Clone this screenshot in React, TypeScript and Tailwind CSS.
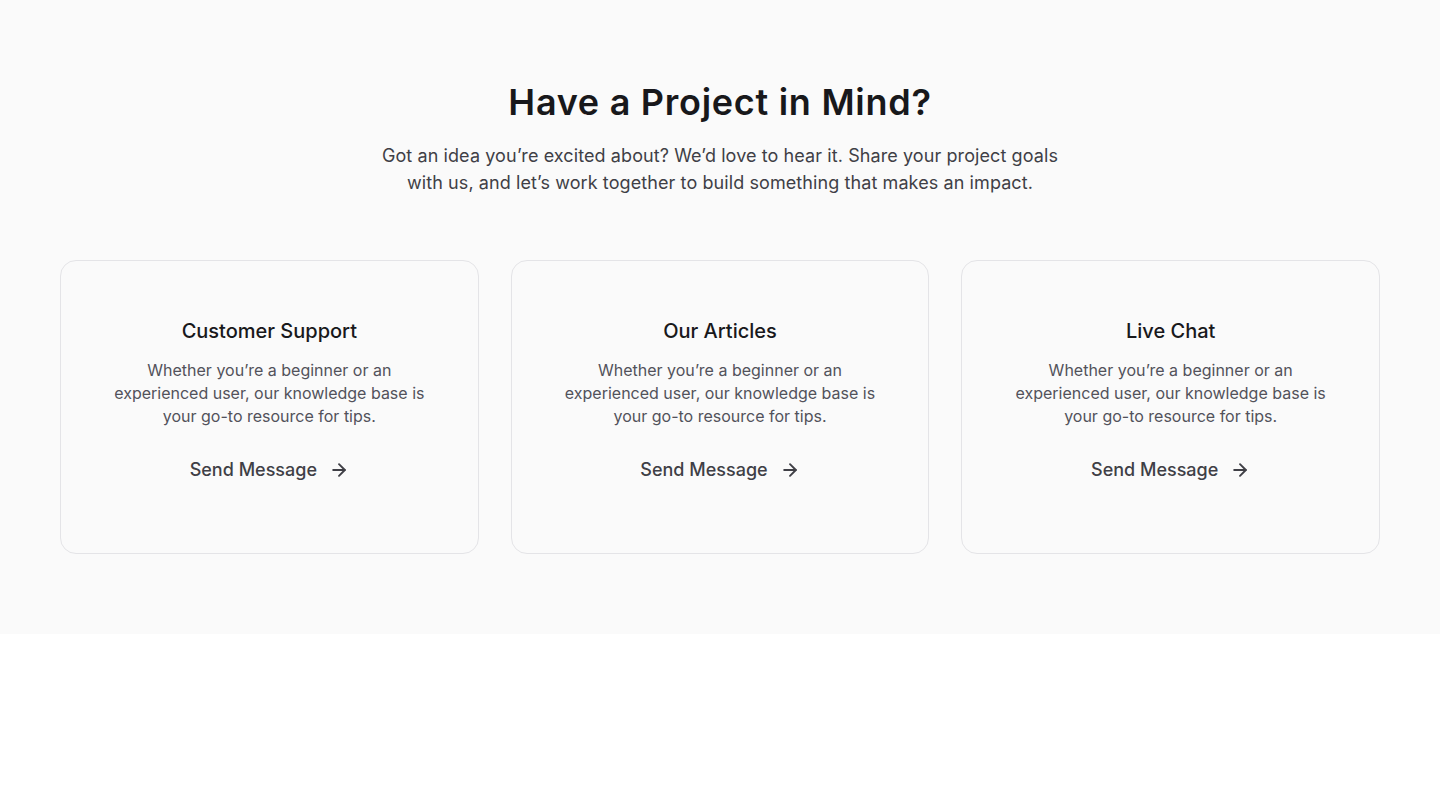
import { ArrowRight } from 'lucide-react'

const cards = [
  { title: 'Customer Support' },
  { title: 'Our Articles' },
  { title: 'Live Chat' },
]

function ContactCard({ title }: { title: string }) {
  return (
    <div className="flex h-[294px] flex-col items-center rounded-2xl border border-[#e4e4e7] px-[48px] pt-14 text-center">
      <h3 className="text-[20px] leading-[28px] font-medium text-[#18181b]">{title}</h3>
      <p className="mt-3.5 text-[16px] leading-[23px] text-[#52525b]">
        Whether you’re a beginner or an experienced user, our knowledge base is your go-to resource for tips.
      </p>
      <a href="#" className="mt-7 inline-flex items-center gap-3 text-[18px] leading-[28px] font-medium text-[#3f3f46]">
        Send Message
        <ArrowRight className="h-5 w-5" strokeWidth={2.25} />
      </a>
    </div>
  )
}

export default function App() {
  return (
    <div className="min-h-screen bg-white font-['Inter',sans-serif]">
      <section className="bg-[#fafafa] px-[60px] pt-[82px] pb-20">
        <div className="mx-auto max-w-[730px] text-center">
          <h2 className="text-[36px] leading-[40px] font-semibold tracking-[0.02em] text-[#18181b]">
            Have a Project in Mind?
          </h2>
          <p className="mx-auto mt-5 max-w-[700px] text-[18px] leading-[27px] tracking-[0.005em] text-[#3f3f46]">
            Got an idea you’re excited about? We’d love to hear it. Share your project goals with us, and let’s work together to build something that makes an impact.
          </p>
        </div>
        <div className="mt-16 grid grid-cols-3 gap-8">
          {cards.map((c) => (
            <ContactCard key={c.title} title={c.title} />
          ))}
        </div>
      </section>
    </div>
  )
}
